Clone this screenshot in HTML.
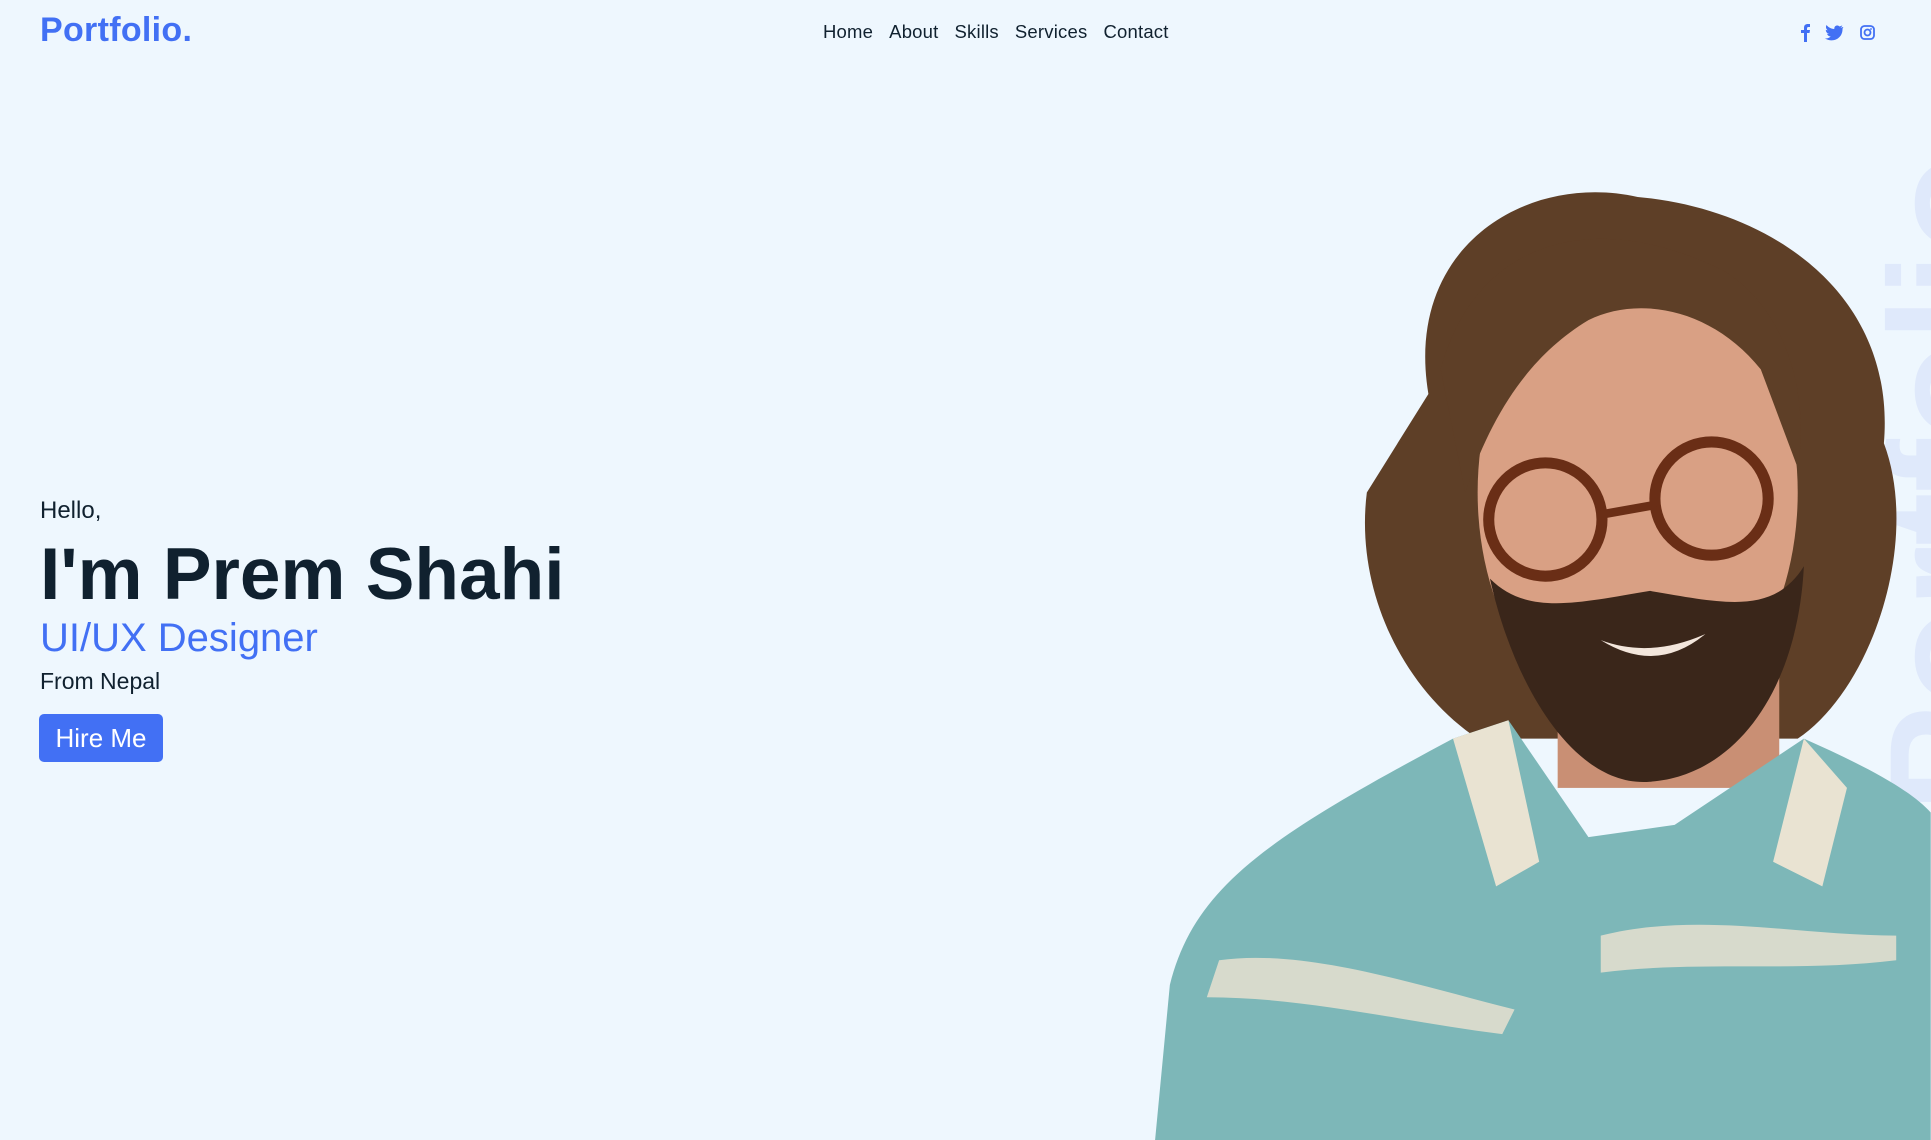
<!DOCTYPE html>
<html><head><meta charset="utf-8"><style>
*{margin:0;padding:0;box-sizing:border-box}
body{width:1931px;height:1140px;background:#eef7fe;font-family:"Liberation Sans",sans-serif;position:relative;overflow:hidden;color:#10212f}
.logo{position:absolute;left:40px;top:11px;font-size:34px;font-weight:bold;color:#4270f4;letter-spacing:0.3px}
nav{position:absolute;left:823px;top:21px;font-size:18.5px;color:#10212f;letter-spacing:0.2px}
nav span{margin-right:16px}
.soc{position:absolute;top:22px;left:1796px}
.t{position:absolute;left:40px}
.btn{position:absolute;left:39px;top:714px;width:124px;height:48px;background:#4270f4;border-radius:5px;color:#fff;font-size:26px;text-align:center;line-height:48px}
svg.p{position:absolute;left:0;top:0}
</style></head><body>
<svg class="p" width="1931" height="1140" viewBox="0 0 1568 926">
<text x="1625" y="660" transform="rotate(-90 1625 660)" font-family="Liberation Sans" font-weight="bold" font-size="130" fill="#dfe9fb">Portfolio</text>
<path d="M1160 320 C1140 200 1240 140 1330 160 C1440 170 1540 240 1530 360 C1560 440 1520 560 1460 600 L1200 600 C1140 560 1100 480 1110 400 Z" fill="#5e3f27"/>
<rect x="1265" y="520" width="180" height="120" fill="#c98f74"/>
<ellipse cx="1330" cy="400" rx="130" ry="190" fill="#d9a084"/>
<path d="M1210 470 C1230 560 1280 640 1340 635 C1410 630 1460 560 1465 460 C1440 500 1400 490 1340 480 C1280 490 1240 500 1210 470Z" fill="#3a261a"/>
<path d="M1300 520 Q1340 535 1385 515 Q1345 548 1300 520Z" fill="#f3e6dc"/>
<path d="M1170 300 C1200 190 1300 170 1400 220 C1450 250 1470 320 1460 380 L1430 300 C1390 250 1330 240 1290 260 C1240 290 1210 340 1190 400 Z" fill="#5e3f27"/>
<circle cx="1255" cy="422" r="46" fill="none" stroke="#6a2e16" stroke-width="9"/>
<circle cx="1390" cy="405" r="46" fill="none" stroke="#6a2e16" stroke-width="9"/>
<path d="M1300 418 L1345 410" stroke="#6a2e16" stroke-width="7"/>
<path d="M938 926 L950 800 C970 720 1030 680 1180 600 L1225 585 L1290 680 L1360 670 L1465 600 C1510 620 1550 640 1568 660 L1568 926 Z" fill="#7db7b8"/>
<path d="M1180 600 L1225 585 L1250 700 L1215 720Z M1465 600 L1500 640 L1480 720 L1440 700Z" fill="#e9e3d2"/>
<path d="M990 780 C1060 770 1150 800 1230 820 L1220 840 C1140 830 1060 810 980 810Z M1300 760 C1380 740 1460 760 1540 760 L1540 780 C1460 790 1380 780 1300 790Z" fill="#e6e1cf" opacity="0.85"/>
</svg>
<div class="logo">Portfolio.</div>
<nav><span>Home</span><span>About</span><span>Skills</span><span>Services</span><span>Contact</span></nav>
<div class="soc">
<svg width="80" height="22" viewBox="0 0 80 22" fill="#4270f4">
<path d="M8 20 V11 H5 V8 H8 V6 C8 3 9.5 2 12 2 H14 V5 H12.5 C11.5 5 11 5.5 11 6.5 V8 H14 L13.5 11 H11 V20Z"/>
<path d="M47 5 C46 5.5 45.5 5.6 44.5 5.7 C45.5 5 46 4.3 46.3 3.4 C45.4 3.9 44.5 4.3 43.5 4.5 C41.5 2.5 38 3.7 38.3 7 C34.8 6.8 32.5 5.3 30.5 3 C29.5 5 30 7 31.7 8.2 C31 8.2 30.3 8 29.8 7.7 C29.8 9.8 31 11.2 33 11.7 C32.3 11.9 31.7 11.9 31 11.8 C31.5 13.4 33 14.5 34.7 14.6 C33 16 31 16.6 28.8 16.4 C37.5 21.5 47 16 46.5 6.5 C47 6.1 47.5 5.6 47 5Z"/>
<rect x="65" y="4" width="13" height="13" rx="3.5" fill="none" stroke="#4270f4" stroke-width="1.8"/><circle cx="71.5" cy="10.5" r="3" fill="none" stroke="#4270f4" stroke-width="1.8"/><circle cx="75" cy="7" r="0.9"/>
</svg></div>
<div class="t" style="top:497px;font-size:24px">Hello,</div>
<div class="t" style="top:533px;font-size:73px;font-weight:bold">I'm Prem Shahi</div>
<div class="t" style="top:616px;font-size:40px;color:#4270f4">UI/UX Designer</div>
<div class="t" style="top:668px;font-size:23px">From Nepal</div>
<div class="btn">Hire Me</div>
</body></html>
